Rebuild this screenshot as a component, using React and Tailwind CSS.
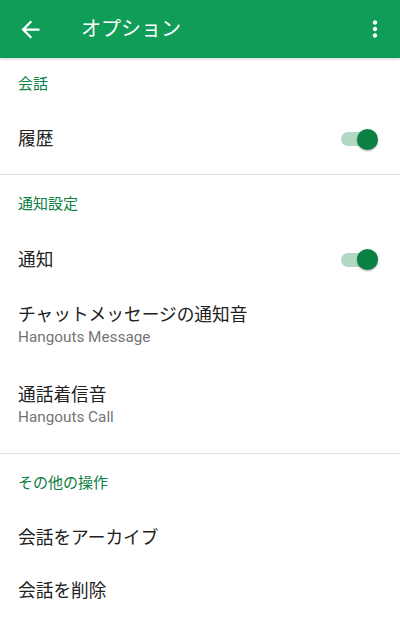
import React from 'react'

function Toggle() {
  return (
    <div className="relative w-[37px] h-[21px] flex items-center">
      <div className="w-[34px] h-[14px] rounded-full bg-[#b3d9c4]" />
      <div className="absolute right-0 top-0 w-[21px] h-[21px] rounded-full bg-[#0b8043] shadow-[0_1px_2px_rgba(0,0,0,0.35)]" />
    </div>
  )
}

function Header({ label, height }) {
  return (
    <div className={`${height} flex items-center px-[18px] text-[15px] text-[#0b8043]`}>
      {label}
    </div>
  )
}

function Row({ title, subtitle, toggle, height }) {
  return (
    <div className={`${height} flex items-center justify-between pl-[18px] pr-[22px]`}>
      <div className="flex flex-col">
        <span className="text-[17.7px] leading-[22px] text-[#212121]">{title}</span>
        {subtitle && (
          <span className="text-[15.3px] leading-[22px] text-[#757575]">{subtitle}</span>
        )}
      </div>
      {toggle && <Toggle />}
    </div>
  )
}

export default function App() {
  return (
    <div
      className="w-[400px] h-[618px] overflow-hidden bg-white"
      style={{ fontFamily: 'Roboto, "Noto Sans CJK JP", sans-serif' }}
    >
      {/* App bar */}
      <div className="relative z-10 h-[58px] bg-[#0f9d58] flex items-center shadow-[0_1px_3px_rgba(0,0,0,0.2)]">
        <svg className="ml-[17px] w-[27px] h-[27px]" viewBox="0 0 24 24" fill="#fff">
          <path d="M20 11H7.83l5.59-5.59L12 4l-8 8 8 8 1.41-1.41L7.83 13H20v-2z" />
        </svg>
        <span className="ml-[37px] text-[20px] text-white">オプション</span>
        <svg className="ml-auto mr-[12px] w-[26px] h-[26px]" viewBox="0 0 24 24" fill="#fff">
          <path d="M12 8c1.1 0 2-.9 2-2s-.9-2-2-2-2 .9-2 2 .9 2 2 2zm0 2c-1.1 0-2 .9-2 2s.9 2 2 2 2-.9 2-2-.9-2-2-2zm0 6c-1.1 0-2 .9-2 2s.9 2 2 2 2-.9 2-2-.9-2-2-2z" />
        </svg>
      </div>

      {/* 会話 */}
      <div className="pb-[6px] border-b border-[#e0e0e0]">
        <Header label="会話" height="h-[52px]" />
        <Row title="履歴" toggle height="h-[58px]" />
      </div>

      {/* 通知設定 */}
      <div className="pb-[7px] border-b border-[#e0e0e0]">
        <Header label="通知設定" height="h-[58px]" />
        <Row title="通知" toggle height="h-[53px]" />
        <Row title="チャットメッセージの通知音" subtitle="Hangouts Message" height="h-[80px]" />
        <Row title="通話着信音" subtitle="Hangouts Call" height="h-[80px]" />
      </div>

      {/* その他の操作 */}
      <div>
        <Header label="その他の操作" height="h-[58px]" />
        <Row title="会話をアーカイブ" height="h-[52px]" />
        <Row title="会話を削除" height="h-[54px]" />
      </div>
    </div>
  )
}
